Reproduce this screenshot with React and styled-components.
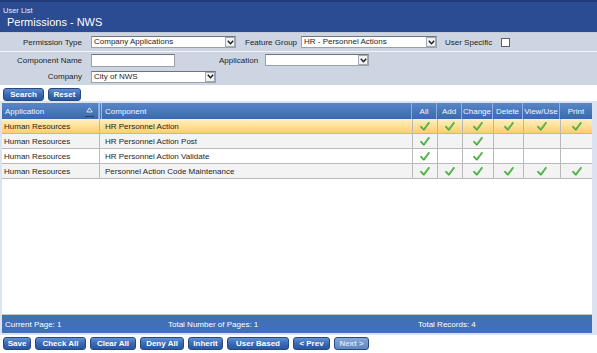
import React from "react";
import styled, { createGlobalStyle } from "styled-components";

const GlobalStyle = createGlobalStyle`
  body {
    margin: 0;
    background: #ffffff;
    font-family: "Liberation Sans", Arial, sans-serif;
    font-size: 8px;
    color: #1e1e1e;
  }
`;

const rows = [
  { app: "Human Resources", comp: "HR Personnel Action", perms: [1, 1, 1, 1, 1, 1] },
  { app: "Human Resources", comp: "HR Personnel Action Post", perms: [1, 0, 1, 0, 0, 0] },
  { app: "Human Resources", comp: "HR Personnel Action Validate", perms: [1, 0, 1, 0, 0, 0] },
  { app: "Human Resources", comp: "Personnel Action Code Maintenance", perms: [1, 1, 1, 1, 1, 1] },
];

const permCols = ["All", "Add", "Change", "Delete", "View/Use", "Print"];
const COLS = "97px 313px 25px 25px 31px 30px 37px 32px";

const Check = () => (
  <svg width="10" height="9" viewBox="0 0 10 9">
    <path d="M1.2 4.8 L3.8 7.6 L8.8 1" fill="none" stroke="#3fa63a" strokeWidth="1.9" strokeLinecap="round" strokeLinejoin="round" />
    <path d="M1.6 4.6 L3.8 7 L8.4 1.2" fill="none" stroke="#7ad86a" strokeWidth="0.7" strokeLinecap="round" />
  </svg>
);

const Chevron = () => (
  <svg width="7" height="5" viewBox="0 0 7 5">
    <path d="M0.8 0.8 L3.5 3.8 L6.2 0.8" fill="none" stroke="#1d1d1d" strokeWidth="1.4" />
  </svg>
);

const Select = ({ value, width }) => (
  <SelectBox $w={width}>
    <SelectText>{value}</SelectText>
    <ArrowBox>
      <Chevron />
    </ArrowBox>
  </SelectBox>
);

export default function App() {
  return (
    <Page>
      <GlobalStyle />
      <Header>
        <Crumb>User List</Crumb>
        <Title>Permissions - NWS</Title>
      </Header>

      <Filters>
        <FilterRow $h={18} $line>
          <Label>Permission Type</Label>
          <Select value="Company Applications" width={145} />
          <InlineLabel $ml={9} $w={56}>Feature Group</InlineLabel>
          <Select value="HR - Personnel Actions" width={136} />
          <InlineLabel $ml={8} $w={56}>User Specific</InlineLabel>
          <CheckBox />
        </FilterRow>
        <FilterRow $h={16}>
          <Label>Component Name</Label>
          <TextInput />
          <InlineLabel $ml={44} $w={46}>Application</InlineLabel>
          <Select value="" width={104} />
        </FilterRow>
        <FilterRow $h={17}>
          <Label>Company</Label>
          <Select value="City of NWS" width={125} />
        </FilterRow>
      </Filters>

      <ActionBar>
        <Button $w={41}>Search</Button>
        <Button $w={33}>Reset</Button>
      </ActionBar>

      <Grid>
        <GridBody>
          <HeadRow>
            <HeadCell>
              Application
              <SortMark>
                <svg width="7" height="6" viewBox="0 0 7 6">
                  <path d="M3.5 0.8 L6.2 5 L0.8 5 Z" fill="none" stroke="#e8eef8" strokeWidth="0.9" />
                </svg>
              </SortMark>
            </HeadCell>
            <HeadCell $double>Component</HeadCell>
            {permCols.map((c) => (
              <HeadCell key={c} $center>
                {c}
              </HeadCell>
            ))}
          </HeadRow>
          {rows.map((r, i) => (
            <DataRow key={r.comp} $selected={i === 0} $alt={i % 2 === 1}>
              <Cell>{r.app}</Cell>
              <Cell $pad={5} $sep>
                {r.comp}
              </Cell>
              {r.perms.map((p, j) => (
                <Cell key={j} $center $sep>
                  {p ? <Check /> : null}
                </Cell>
              ))}
            </DataRow>
          ))}
        </GridBody>
        <Footer>
          <FootCell $w={163}>Current Page: 1</FootCell>
          <FootCell $w={250}>Total Number of Pages: 1</FootCell>
          <FootCell>Total Records: 4</FootCell>
        </Footer>
      </Grid>

      <ButtonBar>
        <Button $w={28}>Save</Button>
        <Button $w={51}>Check All</Button>
        <Button $w={46}>Clear All</Button>
        <Button $w={44}>Deny All</Button>
        <Button $w={35}>Inherit</Button>
        <Button $w={62}>User Based</Button>
        <Button $w={37}>&lt; Prev</Button>
        <Button $w={35} $disabled>
          Next &gt;
        </Button>
      </ButtonBar>
    </Page>
  );
}

const Page = styled.div`
  width: 597px;
  height: 353px;
  overflow: hidden;
  background: #ffffff;
`;

const Header = styled.div`
  height: 30px;
  border-top: 2px solid #1f3a78;
  background: #2b4b93;
  color: #ffffff;
  display: flex;
  flex-direction: column;
  padding-left: 3px;
  box-sizing: content-box;
`;

const Crumb = styled.div`
  font-size: 7.5px;
  line-height: 9px;
  margin-top: 4px;
  color: #e6ecf7;
`;

const Title = styled.div`
  font-size: 11px;
  line-height: 13px;
  margin-top: 1px;
  padding-left: 4px;
`;

const Filters = styled.div`
  background: #cdd5e2;
  border-top: 1px solid #c3cbd9;
  display: flex;
  flex-direction: column;
`;

const FilterRow = styled.div`
  height: ${(p) => p.$h}px;
  display: flex;
  align-items: center;
  border-bottom: ${(p) => (p.$line ? "1px solid #f4f6fa" : "none")};
`;

const Label = styled.div`
  width: 82px;
  text-align: right;
  margin-right: 9px;
  white-space: nowrap;
`;

const InlineLabel = styled.div`
  width: ${(p) => p.$w}px;
  margin-left: ${(p) => p.$ml}px;
  flex-shrink: 0;
  white-space: nowrap;
`;

const SelectBox = styled.div`
  width: ${(p) => p.$w}px;
  height: 12px;
  flex-shrink: 0;
  box-sizing: border-box;
  border: 1px solid #9aa1ab;
  border-top-color: #6f757e;
  background: #ffffff;
  display: flex;
  align-items: center;
`;

const SelectText = styled.div`
  flex: 1;
  padding-left: 2px;
  line-height: 10px;
  white-space: nowrap;
  overflow: hidden;
`;

const ArrowBox = styled.div`
  width: 10px;
  height: 10px;
  box-sizing: border-box;
  border: 1px solid #a3a9b2;
  background: #f1f2f4;
  display: flex;
  align-items: center;
  justify-content: center;
`;

const TextInput = styled.div`
  width: 84px;
  height: 13px;
  flex-shrink: 0;
  box-sizing: border-box;
  border: 1px solid #9aa1ab;
  border-top-color: #6f757e;
  background: #ffffff;
`;

const CheckBox = styled.div`
  width: 9px;
  height: 9px;
  box-sizing: border-box;
  border: 1px solid #5b5f66;
  background: #ffffff;
`;

const ActionBar = styled.div`
  height: 16px;
  display: flex;
  align-items: flex-start;
  gap: 4px;
  padding: 3px 0 0 3px;
  box-sizing: border-box;
`;

const Button = styled.div`
  width: ${(p) => p.$w}px;
  height: 13px;
  box-sizing: border-box;
  border: 1px solid #25497f;
  border-radius: 3px;
  background: ${(p) =>
    p.$disabled
      ? "linear-gradient(#86a6d6, #5e86c0)"
      : "linear-gradient(#5f8fd3 0%, #3a6ab4 50%, #2a579e 100%)"};
  color: ${(p) => (p.$disabled ? "#d7e1f1" : "#ffffff")};
  font-weight: bold;
  font-size: 8px;
  display: flex;
  align-items: center;
  justify-content: center;
  white-space: nowrap;
`;

const Grid = styled.div`
  width: 597px;
  box-sizing: border-box;
  border-style: solid;
  border-color: #dbe3f0;
  border-width: 2px 5px 2px 2px;
  display: flex;
  flex-direction: column;
`;

const GridBody = styled.div`
  height: 211px;
  background: #ffffff;
  border-bottom: 1px solid #c6c6c6;
`;

const HeadRow = styled.div`
  display: grid;
  grid-template-columns: ${COLS};
  height: 16px;
  background: linear-gradient(#5886c6, #3a69b0);
  color: #f2f6fc;
`;

const HeadCell = styled.div`
  position: relative;
  display: flex;
  align-items: center;
  justify-content: ${(p) => (p.$center ? "center" : "flex-start")};
  padding-left: ${(p) => (p.$center ? 0 : 3)}px;
  border-left: ${(p) => (p.$double ? "3px double #9fbbe3" : "none")};
  border-right: 1px solid #8fb0de;
  white-space: nowrap;
  box-sizing: border-box;
  &:last-child {
    border-right: none;
  }
`;

const SortMark = styled.span`
  position: absolute;
  right: 4px;
  top: 4px;
  width: 9px;
  height: 10px;
  display: flex;
  justify-content: center;
  border-bottom: 1px solid #243f70;
  box-sizing: border-box;
`;

const DataRow = styled.div`
  display: grid;
  grid-template-columns: ${COLS};
  height: 15px;
  box-sizing: border-box;
  border-bottom: 1px solid ${(p) => (p.$selected ? "#efb24a" : "#b9b9b9")};
  background: ${(p) =>
    p.$selected
      ? "linear-gradient(#fff0c4, #fdd985 70%, #fbcf6c)"
      : p.$alt
      ? "#f3f3f3"
      : "#ffffff"};
`;

const Cell = styled.div`
  display: flex;
  align-items: center;
  justify-content: ${(p) => (p.$center ? "center" : "flex-start")};
  padding-left: ${(p) => (p.$center ? 0 : p.$pad || 2)}px;
  border-left: ${(p) => (p.$sep ? "1px solid #b9b9b9" : "none")};
  white-space: nowrap;
  box-sizing: border-box;
`;

const Footer = styled.div`
  height: 18px;
  background: #3f70b8;
  color: #ffffff;
  display: flex;
  align-items: center;
  padding-left: 3px;
`;

const FootCell = styled.div`
  width: ${(p) => (p.$w ? `${p.$w}px` : "auto")};
  white-space: nowrap;
`;

const ButtonBar = styled.div`
  display: flex;
  gap: 4px;
  padding: 2px 0 0 3px;
`;
